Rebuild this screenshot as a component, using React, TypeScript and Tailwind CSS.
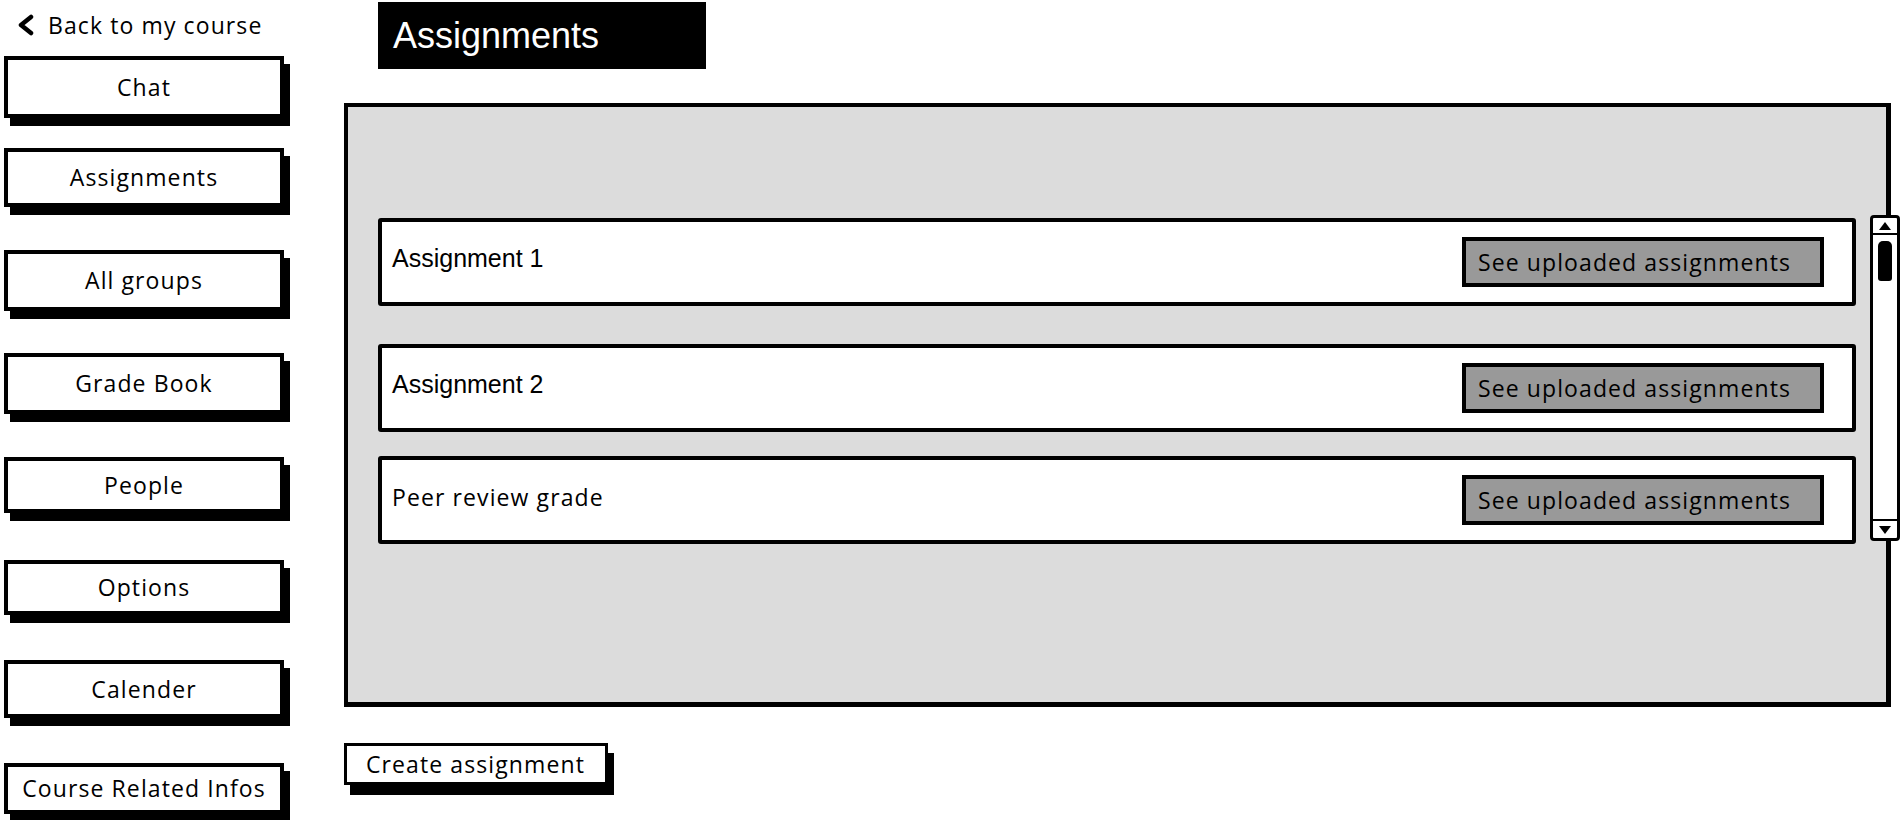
import React from 'react'

// 사이드바 메뉴 항목 (위치/높이는 와이어프레임 기준)
const navItems = [
  { label: 'Chat', cls: 'mt-[18px] h-[62px]' },
  { label: 'Assignments', cls: 'mt-[30px] h-[59px]' },
  { label: 'All groups', cls: 'mt-[43px] h-[61px]' },
  { label: 'Grade Book', cls: 'mt-[42px] h-[61px]' },
  { label: 'People', cls: 'mt-[43px] h-[56px]' },
  { label: 'Options', cls: 'mt-[47px] h-[55px]' },
  { label: 'Calender', cls: 'mt-[45px] h-[58px]' },
  { label: 'Course Related Infos', cls: 'mt-[45px] h-[51px]' },
]

const assignments = [
  { name: 'Assignment 1', font: 'font-["Liberation_Sans",Arial,sans-serif] text-[25px]', cls: 'mt-[111px]' },
  { name: 'Assignment 2', font: 'font-["Liberation_Sans",Arial,sans-serif] text-[25px]', cls: 'mt-[38px]' },
  { name: 'Peer review grade', font: 'font-["Open_Sans",sans-serif] text-[23px] tracking-[1.1px]', cls: 'mt-[24px]' },
]

function ScrollBar() {
  return (
    <div className="absolute top-[108px] right-[-14px] w-[30px] h-[326px] bg-white border-[3px] border-black rounded-[4px] flex flex-col">
      {/* 위 화살표 */}
      <div className="h-[17px] border-b-[2px] border-black flex items-center justify-center">
        <svg width="14" height="10" viewBox="0 0 14 10">
          <polygon points="7,1 13,9 1,9" fill="#000" />
        </svg>
      </div>
      <div className="flex-1 px-[5px] pt-[6px]">
        <div className="w-[14px] h-[40px] bg-black rounded-t-[5px] rounded-b-[3px]" />
      </div>
      {/* 아래 화살표 */}
      <div className="h-[19px] border-t-[2px] border-black flex items-center justify-center">
        <svg width="14" height="10" viewBox="0 0 14 10">
          <polygon points="1,1 13,1 7,9" fill="#000" />
        </svg>
      </div>
    </div>
  )
}

export default function App() {
  return (
    <div className="flex w-[1904px] h-[820px] overflow-hidden bg-white text-black">
      {/* 사이드바 */}
      <aside className="w-[344px] shrink-0 pl-[4px] pt-[12px] flex flex-col font-['Open_Sans',sans-serif] tracking-[1.1px]">
        <div className="flex items-center h-[26px] pl-[13px] gap-[13px] text-[23px]">
          <svg width="18" height="22" viewBox="0 0 18 22" fill="none">
            <polyline points="14,3 4,11 14,19" stroke="#000" strokeWidth="4.5" strokeLinecap="round" strokeLinejoin="round" />
          </svg>
          <span className="leading-none">Back to my course</span>
        </div>
        {navItems.map((item) => (
          <div
            key={item.label}
            className={`${item.cls} w-[280px] shrink-0 bg-white border-[4px] border-black shadow-[6px_8px_0_#000] flex items-center justify-center text-[23px]`}
          >
            {item.label}
          </div>
        ))}
      </aside>

      {/* 메인 영역 */}
      <main className="flex-1 pt-[2px] flex flex-col">
        <div className="ml-[34px] w-[328px] h-[67px] bg-black text-white flex items-center pl-[15px] text-[36px] font-['Liberation_Sans',Arial,sans-serif]">
          Assignments
        </div>

        <div className="relative mt-[34px] w-[1547px] h-[604px] bg-[#dcdcdc] border-[4px] border-b-[5px] border-r-[5px] border-black px-[30px]">
          {assignments.map((a) => (
            <div
              key={a.name}
              className={`${a.cls} h-[88px] bg-white border-[4px] border-black rounded-[3px] flex items-center justify-between pl-[10px] pr-[28px]`}
            >
              <span className={`${a.font} -mt-[6px]`}>{a.name}</span>
              <div className="w-[362px] h-[50px] bg-[#999999] border-[4px] border-black flex items-center pl-[12px] text-[23px] tracking-[1.1px] font-['Open_Sans',sans-serif]">
                See uploaded assignments
              </div>
            </div>
          ))}
          <ScrollBar />
        </div>

        <div className="mt-[36px] w-[264px] h-[42px] bg-white border-[3px] border-black shadow-[6px_10px_0_#000] flex items-center pl-[19px] text-[23px] tracking-[1.1px] font-['Open_Sans',sans-serif]">
          Create assignment
        </div>
      </main>
    </div>
  )
}
